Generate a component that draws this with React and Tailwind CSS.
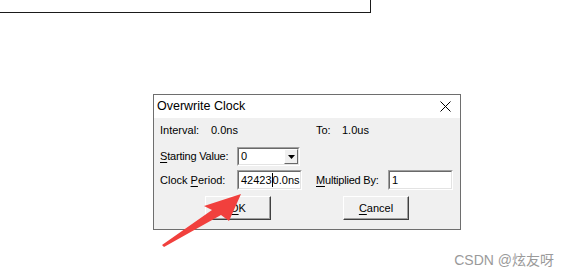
export default function App() {
  const sys = { fontFamily: '"Liberation Sans", Arial, sans-serif' };
  const U = ({ c }) => <span className="underline underline-offset-[2px]">{c}</span>;

  return (
    <div className="relative w-[568px] h-[278px] overflow-hidden bg-white" style={sys}>
      {/* leftover window edge at the top */}
      <div className="w-[371px] h-[13px] border-b border-r border-[#1a1a1a]" />

      {/* dialog */}
      <div className="ml-[153px] mt-[81px] w-[308px] h-[136px] border border-[#6e6e6e] bg-[#f0f0f0] text-[11px] text-black">
        <div className="flex h-[23px] items-center justify-between bg-white pl-[3px] pr-[9px]">
          <span className="text-[12.5px]">Overwrite Clock</span>
          <svg width="11" height="11" viewBox="0 0 11 11">
            <path d="M0.5 0.5 L10.5 10.5 M10.5 0.5 L0.5 10.5" stroke="#000" strokeWidth="1" />
          </svg>
        </div>

        <div className="flex flex-col pl-[6px]">
          {/* interval row */}
          <div className="mt-[5px] flex h-[14px] items-center">
            <span className="w-[51px]">Interval:</span>
            <span className="w-[105px]">0.0ns</span>
            <span className="w-[26px]">To:</span>
            <span>1.0us</span>
          </div>

          {/* starting value */}
          <div className="mt-[10px] flex h-[19px] items-center">
            <span className="w-[77px] tracking-[-0.2px]"><U c="S" />tarting Value:</span>
            <div className="flex h-[19px] w-[63px] items-center border border-t-[#a0a0a0] border-l-[#a0a0a0] border-r-white border-b-white">
              <div className="flex h-full flex-1 items-center border border-t-[#696969] border-l-[#696969] border-r-[#e3e3e3] border-b-[#e3e3e3] bg-white pl-[2px]">
                <span className="flex-1">0</span>
                <div className="flex h-[15px] w-[14px] items-center justify-center border border-t-white border-l-white border-r-[#696969] border-b-[#696969] bg-[#f0f0f0]">
                  <svg width="7" height="4" viewBox="0 0 7 4">
                    <path d="M0 0 H7 L3.5 4 Z" fill="#000" />
                  </svg>
                </div>
              </div>
            </div>
          </div>

          {/* clock period / multiplied by */}
          <div className="mt-[4px] flex h-[20px] items-center">
            <span className="w-[77px]">Clock <U c="P" />eriod:</span>
            <div className="flex h-[20px] w-[65px] items-center border border-t-[#a0a0a0] border-l-[#a0a0a0] border-r-white border-b-white">
              <div className="flex h-full flex-1 items-center border border-t-[#696969] border-l-[#696969] border-r-[#e3e3e3] border-b-[#e3e3e3] bg-white pl-[2px]">
                <span>42423</span>
                <span className="h-[14px] w-px bg-black" />
                <span>0.0ns</span>
              </div>
            </div>
            <span className="ml-[14px] w-[72px] tracking-[-0.2px]"><U c="M" />ultiplied By:</span>
            <div className="flex h-[20px] w-[65px] items-center border border-t-[#a0a0a0] border-l-[#a0a0a0] border-r-white border-b-white">
              <div className="flex h-full flex-1 items-center border border-t-[#696969] border-l-[#696969] border-r-[#e3e3e3] border-b-[#e3e3e3] bg-white pl-[2px]">
                <span>1</span>
              </div>
            </div>
          </div>

          {/* buttons */}
          <div className="mt-[6px] flex h-[24px] items-center">
            <button className="ml-[45px] h-[24px] w-[66px] border border-t-white border-l-white border-r-[#404040] border-b-[#404040] bg-[#f0f0f0] text-[11px] shadow-[inset_-1px_-1px_0_#a0a0a0]">
              <U c="O" />K
            </button>
            <button className="ml-[72px] h-[24px] w-[66px] border border-t-white border-l-white border-r-[#404040] border-b-[#404040] bg-[#f0f0f0] text-[11px] shadow-[inset_-1px_-1px_0_#a0a0a0]">
              <U c="C" />ancel
            </button>
          </div>
        </div>
      </div>

      {/* red annotation arrow */}
      <svg className="absolute left-0 top-0" width="568" height="278" viewBox="0 0 568 278">
        <polygon
          points="241,194 229,221 221,215 164,247 162,245 212,210 204,206"
          fill="#f1403d"
        />
      </svg>

      {/* watermark */}
      <span
        className="absolute right-[14px] bottom-[7px] text-[14px] text-[#9a9a9a]"
        style={{ fontFamily: '"Liberation Sans", "Noto Sans CJK SC", sans-serif' }}
      >
        CSDN @炫友呀
      </span>
    </div>
  );
}
